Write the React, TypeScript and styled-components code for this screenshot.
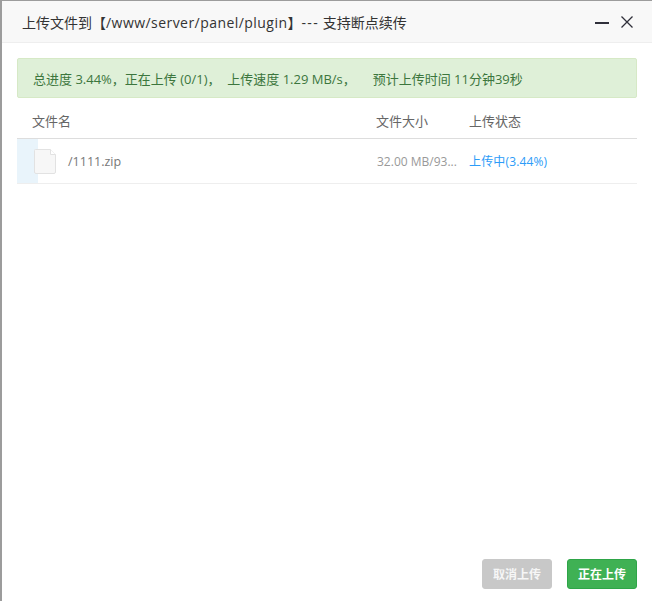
import * as React from 'react'
import styled, { createGlobalStyle } from 'styled-components'

const Global = createGlobalStyle`
  html, body {
    margin: 0;
    padding: 0;
    background: #fff;
  }
  body {
    font-family: "Open Sans", "Noto Sans CJK SC", sans-serif;
    font-size: 12px;
    color: #666;
  }
  * {
    box-sizing: border-box;
  }
`

const Backdrop = styled.div`
  width: 652px;
  height: 601px;
  background: #9c9c9c;
  padding: 1px 0 0 2px;
  overflow: hidden;
`

const Dialog = styled.div`
  width: 650px;
  height: 600px;
  background: #fff;
  display: flex;
  flex-direction: column;
`

const TitleBar = styled.div`
  flex: none;
  height: 42px;
  background: #f8f8f8;
  border-bottom: 1px solid #eee;
  display: flex;
  align-items: center;
  justify-content: space-between;
  padding: 0 19px 0 20px;
`

const Title = styled.div`
  font-size: 14px;
  color: #333;
  white-space: nowrap;
`

const TitlePath = styled.span`
  letter-spacing: 0.45px;
`

const TitleDashes = styled.span`
  letter-spacing: 1.4px;
`

const WindowButtons = styled.div`
  display: flex;
  align-items: center;
  gap: 12px;
`

const Body = styled.div`
  flex: 1;
  padding: 15px 15px 12px;
  display: flex;
  flex-direction: column;
`

const Notice = styled.div`
  height: 40px;
  background: #dff0d8;
  border: 1px solid #d6e9c6;
  border-radius: 2px;
  color: #3c763d;
  font-size: 13px;
  display: flex;
  align-items: center;
  padding-left: 15px;
  white-space: pre;
`

const Row = styled.div<{ $head?: boolean }>`
  position: relative;
  display: grid;
  grid-template-columns: 359px 93px 1fr;
  align-items: center;
  height: ${p => (p.$head ? '41px' : '45px')};
  padding-top: ${p => (p.$head ? '4px' : '0')};
  border-bottom: 1px solid ${p => (p.$head ? '#ddd' : '#eee')};
`

const HeadCell = styled.div`
  font-size: 13px;
  color: #666;
  padding-left: 15px;

  & + & {
    padding-left: 0;
  }
`

const Progress = styled.div`
  position: absolute;
  left: 0;
  top: 0;
  bottom: 0;
  background: #e9f4fb;
`

const NameCell = styled.div`
  position: relative;
  display: flex;
  align-items: center;
  gap: 12px;
  padding-left: 17px;
  color: #777;
  font-size: 12.5px;
`

const SizeCell = styled.div`
  font-size: 12px;
  color: #999;
  white-space: nowrap;
  padding-left: 1px;
`

const StatusCell = styled.div`
  font-size: 12px;
  letter-spacing: 0.15px;
  color: #2c9cf8;
`

const Footer = styled.div`
  margin-top: auto;
  display: flex;
  justify-content: flex-end;
  gap: 15px;
`

const Button = styled.div<{ $disabled?: boolean }>`
  width: 70px;
  height: 30px;
  border-radius: 3px;
  border: 1px solid ${p => (p.$disabled ? '#c8c8c8' : '#2ea548')};
  background: ${p => (p.$disabled ? '#c8c8c8' : '#3fb154')};
  color: ${p => (p.$disabled ? '#f6f6f6' : '#fff')};
  font-size: 12px;
  font-weight: 700;
  display: flex;
  align-items: center;
  justify-content: center;
`

const FileIcon = () => (
  <svg width="22" height="25" viewBox="0 0 22 25">
    <path d="M1.5 .5H16.5L21.5 5.5V23a1.5 1.5 0 0 1-1.5 1.5H2A1.5 1.5 0 0 1 .5 23V1.5a1 1 0 0 1 1-1z" fill="#f7f7f7" stroke="#e2e2e2" />
    <path d="M16.5 .5V5.5H21.5" fill="#fff" stroke="#e2e2e2" />
  </svg>
)

export default function App() {
  return (
    <>
      <Global />
      <Backdrop>
        <Dialog>
          <TitleBar>
            <Title>上传文件到【<TitlePath>/www/server/panel/plugin</TitlePath>】<TitleDashes>---</TitleDashes> 支持断点续传</Title>
            <WindowButtons>
              <svg width="14" height="14" viewBox="0 0 14 14">
                <rect x="0" y="7" width="14" height="2" fill="#2f2f3a" />
              </svg>
              <svg width="12" height="12" viewBox="0 0 12 12">
                <path d="M.5 .5L11.5 11.5M11.5 .5L.5 11.5" stroke="#2f2f3a" strokeWidth="1.3" fill="none" />
              </svg>
            </WindowButtons>
          </TitleBar>
          <Body>
            <Notice>总进度 3.44%，正在上传 (0/1)，  上传速度 1.29 MB/s，     预计上传时间 11分钟39秒</Notice>
            <Row $head>
              <HeadCell>文件名</HeadCell>
              <HeadCell>文件大小</HeadCell>
              <HeadCell>上传状态</HeadCell>
            </Row>
            <Row>
              <Progress style={{ width: `${3.44 * 6.1}px` }} />
              <NameCell>
                <FileIcon />
                /1111.zip
              </NameCell>
              <SizeCell>32.00 MB/93...</SizeCell>
              <StatusCell>上传中(3.44%)</StatusCell>
            </Row>
            <Footer>
              <Button $disabled>取消上传</Button>
              <Button>正在上传</Button>
            </Footer>
          </Body>
        </Dialog>
      </Backdrop>
    </>
  )
}
